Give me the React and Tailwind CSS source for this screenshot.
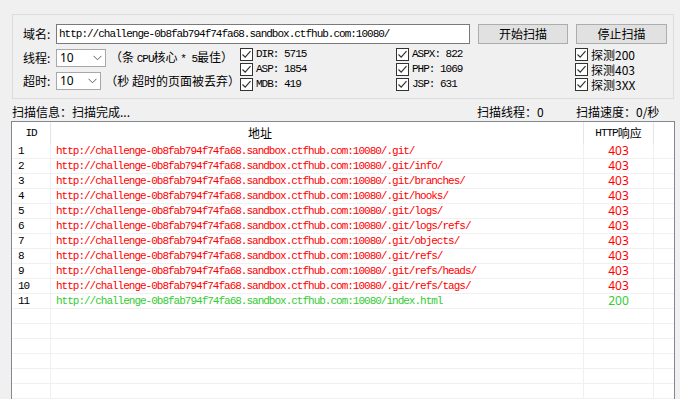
import React from "react";

const BASE = "http://challenge-0b8fab794f74fa68.sandbox.ctfhub.com:10080/";
const PATHS = [
  ".git/",
  ".git/info/",
  ".git/branches/",
  ".git/hooks/",
  ".git/logs/",
  ".git/logs/refs/",
  ".git/objects/",
  ".git/refs/",
  ".git/refs/heads/",
  ".git/refs/tags/",
  "index.html",
];

const mono = "font-['Liberation_Mono','Noto_Sans_CJK_SC',monospace] text-[11px] tracking-[-1px]";
const cjk = "font-['Noto_Sans_CJK_SC','Noto_Sans',sans-serif] text-[12px]";
const num = "font-['Noto_Sans','Liberation_Sans',sans-serif] text-[12px]";

function Check({ children, mono: isMono }) {
  return (
    <div className="flex h-[15px] items-center">
      <div className="flex h-[13px] w-[13px] shrink-0 items-center justify-center border border-[#333333] bg-white">
        <svg width="11" height="11" viewBox="0 0 11 11">
          <path d="M1.5 5.5 L4.2 8.2 L9.5 2.2" fill="none" stroke="#333333" strokeWidth="1.2" />
        </svg>
      </div>
      <span className={`ml-[3px] leading-[15px] whitespace-nowrap ${isMono ? mono : cjk}`}>{children}</span>
    </div>
  );
}

function Combo() {
  return (
    <div className="flex h-[18px] w-[50px] items-center justify-between border border-[#a8a8a8] bg-white pl-[3px] pr-[3px]">
      <span className={`${num} leading-[16px]`}>10</span>
      <svg width="9" height="6" viewBox="0 0 9 6">
        <path d="M0.5 0.8 L4.5 4.8 L8.5 0.8" fill="none" stroke="#606060" strokeWidth="1" />
      </svg>
    </div>
  );
}

export default function App() {
  const rows = [];
  for (let i = 0; i < 18; i++) {
    const p = PATHS[i];
    const ok = p === "index.html";
    const color = ok ? "text-[#33cc33]" : "text-[#ff0000]";
    rows.push(
      <div key={i} className="flex h-[15px] border-b border-[#f0f0f0]">
        <div className={`flex w-[39px] shrink-0 items-center border-r border-[#f0f0f0] pl-[6px] leading-[14px] ${mono} text-black`}>
          {p ? i + 1 : ""}
        </div>
        <div className={`flex w-[533px] shrink-0 items-center border-r border-[#f0f0f0] pl-[5px] leading-[14px] ${mono} ${color}`}>
          {p ? BASE + p : ""}
        </div>
        <div className={`flex w-[70px] shrink-0 items-center justify-center border-r border-[#f0f0f0] ${num} leading-[14px] ${color}`}>
          {p ? (ok ? "200" : "403") : ""}
        </div>
        <div className="flex-1" />
      </div>
    );
  }

  return (
    <div className={`h-[399px] w-[680px] overflow-hidden bg-[#f0f0f0] pt-[14px] text-black ${cjk}`}>
      {/* group box */}
      <div className="ml-[12px] h-[85px] w-[662px] border border-[#dcdcdc] pt-[9px]">
        <div className="flex h-[20px] items-center">
          <span className="w-[43px] shrink-0 pl-[10px] leading-[16px]">域名:</span>
          <div className="flex h-[20px] w-[414px] items-center border border-[#7a7a7a] bg-white pl-[2px]">
            <span className={`${mono} leading-[16px]`}>{BASE}</span>
          </div>
          <button className="ml-[8px] h-[20px] w-[90px] border border-[#adadad] bg-[#e1e1e1] leading-[16px]">开始扫描</button>
          <button className="ml-[8px] h-[20px] w-[91px] border border-[#adadad] bg-[#e1e1e1] leading-[16px]">停止扫描</button>
        </div>
        <div className="mt-[3px] flex">
          <div className="w-[227px] shrink-0 pt-[2px]">
            <div className="flex h-[18px] items-center">
              <span className="w-[43px] shrink-0 pl-[10px] leading-[16px]">线程:</span>
              <Combo />
              <span className="ml-[4px] leading-[16px] whitespace-nowrap">
                （条 <span className={mono}>CPU</span>核心 <span className={mono}>* 5</span>最佳）
              </span>
            </div>
            <div className="mt-[5px] flex h-[18px] items-center">
              <span className="w-[43px] shrink-0 pl-[10px] leading-[16px]">超时:</span>
              <Combo />
              <span className="ml-[4px] leading-[16px] whitespace-nowrap">（秒 超时的页面被丢弃）</span>
            </div>
          </div>
          <div className="w-[156px] shrink-0">
            <Check mono>DIR: 5715</Check>
            <Check mono>ASP: 1854</Check>
            <Check mono>MDB: 419</Check>
          </div>
          <div className="w-[179px] shrink-0">
            <Check mono>ASPX: 822</Check>
            <Check mono>PHP: 1069</Check>
            <Check mono>JSP: 631</Check>
          </div>
          <div>
            <Check>探测200</Check>
            <Check>探测403</Check>
            <Check>探测3XX</Check>
          </div>
        </div>
      </div>

      {/* status */}
      <div className="mt-[5px] flex h-[16px] items-center leading-[16px]">
        <span className="w-[477px] shrink-0 pl-[12px]">扫描信息：扫描完成...</span>
        <span className="w-[99px] shrink-0">扫描线程：0</span>
        <span>扫描速度：0/秒</span>
      </div>

      {/* table */}
      <div className="ml-[11px] mt-[1px] h-[300px] w-[664px] border border-[#828790] bg-white">
        <div className="flex h-[22px]">
          <div className={`flex w-[39px] shrink-0 items-center justify-center border-r border-[#e5e5e5] leading-[16px] ${mono}`}>ID</div>
          <div className="flex w-[533px] shrink-0 items-center border-r border-[#e5e5e5] pl-[197px] leading-[16px]">地址</div>
          <div className="flex w-[70px] shrink-0 items-center justify-center border-r border-[#e5e5e5] leading-[16px]">
            <span className={mono}>HTTP</span>响应
          </div>
          <div className="flex-1" />
        </div>
        {rows}
      </div>
    </div>
  );
}
